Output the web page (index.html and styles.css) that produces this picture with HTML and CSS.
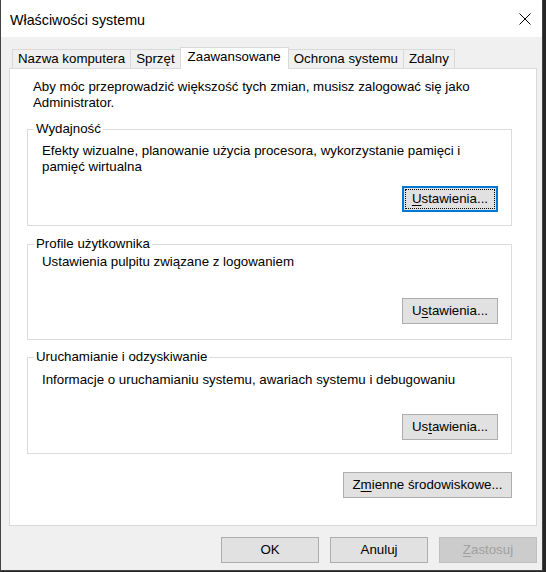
FILE: index.html
```html
<!DOCTYPE html>
<html lang="pl">
<head>
<meta charset="utf-8">
<title>Właściwości systemu</title>
<link rel="stylesheet" href="styles.css">
</head>
<body>
<div class="window">
  <header class="titlebar">
    <span class="title">Właściwości systemu</span>
    <svg class="close" width="12" height="12" viewBox="0 0 12 12" aria-label="Zamknij">
      <path d="M0.5 0.5L11.5 11.5M11.5 0.5L0.5 11.5" stroke="#000" stroke-width="1" fill="none"/>
    </svg>
  </header>
  <div class="content">
    <div class="tabs">
      <div class="tab">Nazwa komputera</div>
      <div class="tab">Sprzęt</div>
      <div class="tab active">Zaawansowane</div>
      <div class="tab">Ochrona systemu</div>
      <div class="tab">Zdalny</div>
    </div>
    <div class="panel">
      <p class="intro">Aby móc przeprowadzić większość tych zmian, musisz zalogować się jako Administrator.</p>

      <fieldset class="group g1">
        <legend>Wydajność</legend>
        <div class="group-body">
          <p class="group-text">Efekty wizualne, planowanie użycia procesora, wykorzystanie pamięci i pamięć wirtualna</p>
          <button class="btn btn-sm focused"><u>U</u>stawienia...</button>
        </div>
      </fieldset>

      <fieldset class="group g2">
        <legend>Profile użytkownika</legend>
        <div class="group-body">
          <p class="group-text">Ustawienia pulpitu związane z logowaniem</p>
          <button class="btn btn-sm">U<u>s</u>tawienia...</button>
        </div>
      </fieldset>

      <fieldset class="group g3">
        <legend>Uruchamianie i odzyskiwanie</legend>
        <div class="group-body">
          <p class="group-text">Informacje o uruchamianiu systemu, awariach systemu i debugowaniu</p>
          <button class="btn btn-sm">Us<u>t</u>awienia...</button>
        </div>
      </fieldset>

      <div class="env-row">
        <button class="btn btn-wide">Z<u>m</u>ienne środowiskowe...</button>
      </div>
    </div>
    <div class="actions">
      <button class="btn btn-md">OK</button>
      <button class="btn btn-md">Anuluj</button>
      <button class="btn btn-md disabled"><u>Z</u>astosuj</button>
    </div>
  </div>
</div>
</body>
</html>
```
FILE: styles.css
```css
html, body {
  margin: 0;
  padding: 0;
  background: #262626;
  height: 100%;
}

body {
  font-family: "Liberation Sans", Arial, sans-serif;
  font-size: 13.3px;
  color: #000;
}

.window {
  width: 541px;
  height: 570px;
  border: 1px solid #444;
  border-top: 0;
  background: #f0f0f0;
  display: flex;
  flex-direction: column;
}

.titlebar {
  height: 37px;
  flex: none;
  background: #fff;
  display: flex;
  align-items: center;
  justify-content: space-between;
  padding: 0 11px 0 9px;
}

.title {
  font-size: 14.3px;
  line-height: 16px;
  padding-top: 2px;
}

.close {
  display: block;
}

.content {
  display: flex;
  flex-direction: column;
  flex: 1;
}

.tabs {
  display: flex;
  align-items: flex-end;
  height: 22px;
  margin: 10px 0 0 11px;
  position: relative;
  z-index: 1;
}

.tab {
  box-sizing: border-box;
  height: 19px;
  margin-bottom: 1px;
  padding: 0 5px;
  border: 1px solid #d9d9d9;
  border-bottom: 0;
  background: #f0f0f0;
  line-height: 18px;
  white-space: nowrap;
}

.tab + .tab {
  margin-left: -1px;
}

.tab.active {
  height: 22px;
  margin-bottom: 0;
  padding: 0 7px;
  background: #fff;
  line-height: 18px;
  position: relative;
  z-index: 2;
}

.panel {
  margin: -1px 5px 0 8px;
  background: #fff;
  border: 1px solid #d9d9d9;
  padding: 10px 0 27px 0;
}

.intro {
  margin: 0 0 0 23px;
  width: 470px;
  line-height: 16px;
}

.group {
  margin: 10px 24px 0 17px;
  padding: 0;
  border: 1px solid #dcdcdc;
  min-width: 0;
}

.group legend {
  margin-left: 6px;
  padding: 0 2px;
  line-height: 16px;
}

.group-body {
  display: flex;
  flex-direction: column;
  padding: 6px 13px 13px 14px;
}

.group-text {
  margin: 0;
  max-width: 440px;
  line-height: 16px;
}

.group-body .btn {
  align-self: flex-end;
  margin-top: 11px;
}

.g2 .group-body {
  padding-top: 2px;
  padding-bottom: 15px;
}

.g2 .group-body .btn {
  margin-top: 28px;
}

.g3 {
  margin-top: 9px;
}

.g3 .group-body {
  padding-top: 7px;
}

.g3 .group-body .btn {
  margin-top: 26px;
}

.env-row {
  display: flex;
  justify-content: flex-end;
  margin: 18px 24px 0 0;
}

.actions {
  display: flex;
  justify-content: flex-end;
  gap: 11px;
  margin: 11px 5px 0 0;
}

.btn {
  box-sizing: border-box;
  height: 26px;
  padding: 0;
  border: 1px solid #adadad;
  background: #e1e1e1;
  color: #000;
  font: inherit;
  line-height: 22px;
  text-align: center;
  border-radius: 0;
}

.btn u {
  text-underline-offset: 2px;
}

.btn-sm {
  width: 96px;
}

.btn-md {
  width: 98px;
}

.btn-wide {
  width: 169px;
}

.btn.focused {
  border: 2px solid #0078d7;
  outline: 1px dotted #000;
  outline-offset: -4px;
}

.btn.disabled {
  background: #cccccc;
  border-color: #bfbfbf;
  color: #a0a0a0;
}
```
